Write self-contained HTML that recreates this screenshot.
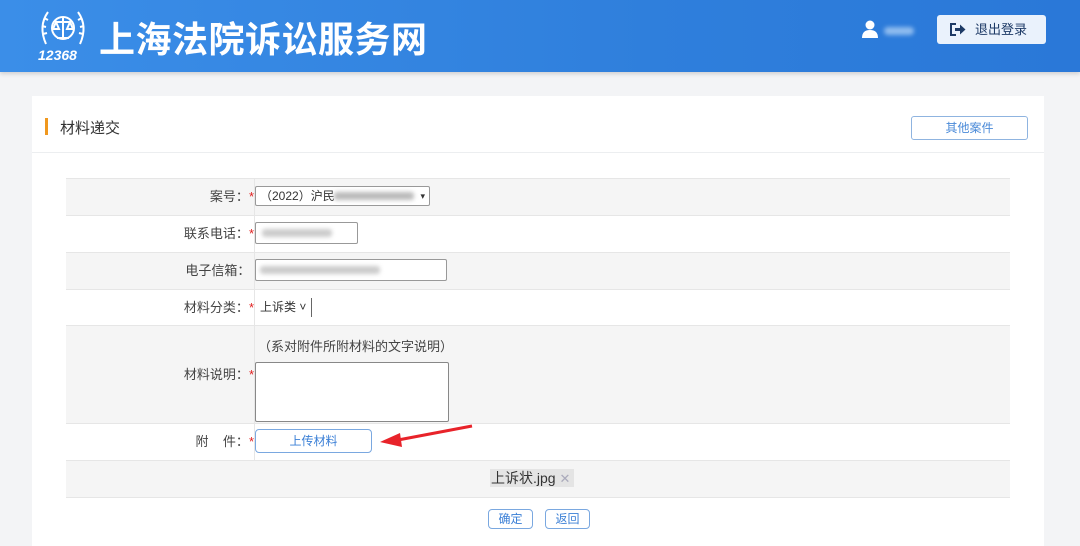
<!DOCTYPE html>
<html><head><meta charset="utf-8"><style>
*{margin:0;padding:0;box-sizing:border-box}
body{width:1080px;height:538px;overflow:hidden;background:#f3f4f6;font-family:"Liberation Sans","Noto Sans CJK SC",sans-serif;position:relative;font-size:13px;color:#333}
.hdr{position:absolute;left:0;top:0;width:1080px;height:72px;background:linear-gradient(90deg,#3b8ee8,#2f7fdc 60%,#2a78d8);box-shadow:0 2px 4px rgba(0,0,0,.15)}
.logo{position:absolute;left:36px;top:8px;width:54px;height:56px;color:#fff}
.title{position:absolute;left:99px;top:11px;font-size:36px;color:#fff;font-weight:bold;letter-spacing:0.5px}
.user{position:absolute;left:862px;top:20px}
.uname{position:absolute;left:884px;top:27px;width:30px;height:8px;background:#8fbcef;border-radius:4px;filter:blur(2px)}
.logout{position:absolute;left:937px;top:15px;width:109px;height:29px;background:#eaf2fc;border-radius:3px;color:#1d3a66;font-size:13px;line-height:29px;padding-left:38px}
.card{position:absolute;left:32px;top:96px;width:1012px;height:450px;background:#fff}
.bar{position:absolute;left:45px;top:118px;width:3px;height:17px;background:#f0981e}
.ct{position:absolute;left:60px;top:117px;font-size:15px;color:#333}
.sep{position:absolute;left:32px;top:152px;width:1012px;height:1px;background:#eceef0}
.other{position:absolute;left:911px;top:116px;width:117px;height:24px;border:1px solid #8fb4e0;border-radius:3px;color:#4a8ad8;font-size:12px;text-align:center;line-height:22px}
.row{position:absolute;left:66px;width:944px;border-top:1px solid #e6e6e6}
.g{background:#f5f5f5}
.div{position:absolute;left:254px;top:178px;width:1px;height:282px;background:#e6e6e6}
.st{color:#e02020}
.l{position:absolute;left:0;width:254px;text-align:right;font-size:13px;color:#444}
.inp{position:absolute;background:#fff;border:1px solid #999;border-radius:2px}
.blur{position:absolute;height:8px;background:#ccc;filter:blur(2px);border-radius:3px}
.btn{position:absolute;border:1px solid #7aa8e0;border-radius:4px;color:#3a7fd6;text-align:center;background:#fff}
</style></head><body>
<div class="hdr">
<svg class="logo" viewBox="0 0 54 56"><g fill="none" stroke="#fff" stroke-width="2"><path d="M12 4 Q2 18 10 36"/><path d="M42 4 Q52 18 44 36"/><path d="M8 10l4 2M6 18l4 1M7 26l4-1M46 10l-4 2M48 18l-4 1M47 26l-4-1"/><circle cx="27" cy="20" r="11"/><path d="M27 9v22M19 14h16M20 14l-3 7h6zM34 14l-3 7h6zM21 30h12"/></g><text x="2" y="52" font-size="14" font-style="italic" font-weight="bold" fill="#fff" font-family="Liberation Sans">12368</text></svg>
<div class="title">上海法院诉讼服务网</div>
<svg class="user" width="16" height="18" viewBox="0 0 16 18"><circle cx="8" cy="5" r="4.5" fill="#fff"/><path d="M0 18 Q0 10 8 10 Q16 10 16 18z" fill="#fff"/></svg>
<div class="uname"></div>
<div class="logout"><svg style="position:absolute;left:13px;top:8px" width="16" height="13" viewBox="0 0 16 13"><path d="M6 1H1v11h5" fill="none" stroke="#1d3a66" stroke-width="2"/><path d="M5 5h5V1.5l5.5 5L10 11.5V8H5z" fill="#1d3a66"/></svg>退出登录</div>
</div>
<div class="card"></div>
<div class="bar"></div><div class="ct">材料递交</div>
<div class="other">其他案件</div>
<div class="sep"></div>

<div class="row g" style="top:178px;height:37px"></div>
<div class="row" style="top:215px;height:37px"></div>
<div class="row g" style="top:252px;height:37px"></div>
<div class="row" style="top:289px;height:36px"></div>
<div class="row g" style="top:325px;height:98px"></div>
<div class="row" style="top:423px;height:37px"></div>
<div class="row g" style="top:460px;height:37px"></div>
<div class="row" style="top:497px;height:41px"></div>
<div class="div"></div>

<div class="l" style="top:186px">案号：<span class="st">*</span></div>
<div class="l" style="top:223px">联系电话：<span class="st">*</span></div>
<div class="l" style="top:260px">电子信箱：&nbsp;</div>
<div class="l" style="top:297px">材料分类：<span class="st">*</span></div>
<div class="l" style="top:364px">材料说明：<span class="st">*</span></div>
<div class="l" style="top:431px">附&nbsp;&nbsp;&nbsp;&nbsp;件：<span class="st">*</span></div>

<div class="inp" style="left:255px;top:186px;width:175px;height:20px;font-size:12px;line-height:18px;padding-left:4px">（2022）沪民<span class="blur" style="left:78px;top:5px;width:80px;background:#bbb"></span><span style="position:absolute;right:4px;top:0;font-size:9px">▾</span></div>
<div class="inp" style="left:255px;top:222px;width:103px;height:22px"><span class="blur" style="left:6px;top:6px;width:70px"></span></div>
<div class="inp" style="left:255px;top:259px;width:192px;height:22px"><span class="blur" style="left:4px;top:6px;width:120px"></span></div>
<div style="position:absolute;left:256px;top:298px;width:56px;height:19px;border-right:1px solid #666;font-size:12px;line-height:19px;padding-left:4px">上诉类 ˅</div>
<div style="position:absolute;left:258px;top:336px;font-size:13px;color:#444">（系对附件所附材料的文字说明）</div>
<div class="inp" style="left:255px;top:362px;width:194px;height:60px;border-color:#888"></div>
<div class="btn" style="left:255px;top:429px;width:117px;height:24px;line-height:22px;font-size:12px">上传材料</div>
<svg style="position:absolute;left:378px;top:424px" width="96" height="26" viewBox="0 0 96 26"><path d="M94 2 L20 16" stroke="#e8232a" stroke-width="3" fill="none"/><path d="M2 18 L22 9 L24 23z" fill="#e8232a"/></svg>
<div style="position:absolute;left:490px;top:469px;width:84px;height:18px;background:#e4e4e4;font-size:14px;line-height:18px;padding-left:1px;color:#333">上诉状.jpg <span style="color:#aab;font-size:13px">✕</span></div>
<div class="btn" style="left:488px;top:509px;width:45px;height:20px;font-size:12px;line-height:18px">确定</div>
<div class="btn" style="left:545px;top:509px;width:45px;height:20px;font-size:12px;line-height:18px">返回</div>
</body></html>
